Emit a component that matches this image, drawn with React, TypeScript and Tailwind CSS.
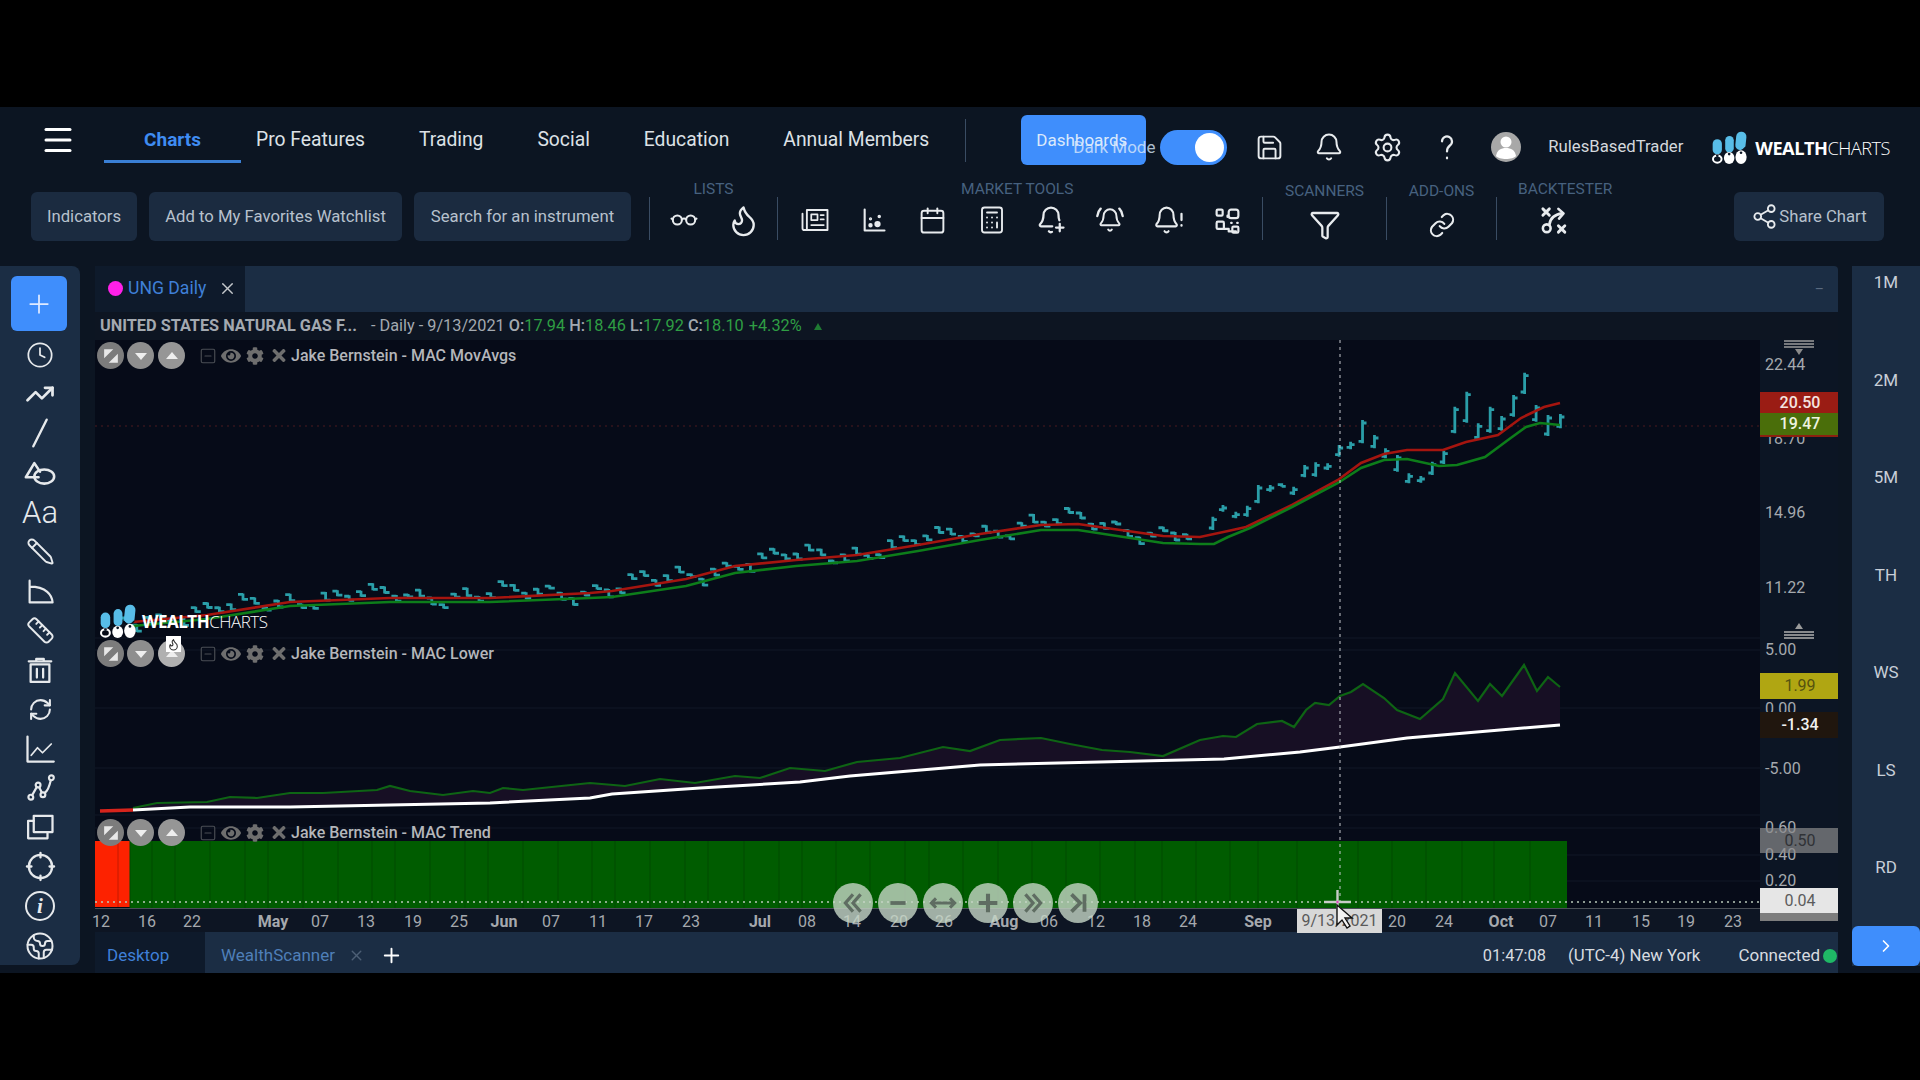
import type { ReactNode } from 'react';
import {
  Bell,
  Calculator,
  Calendar,
  ChevronRight,
  Clock,
  Earth,
  Filter,
  Flame,
  Menu,
  Pencil,
  Plus,
  RefreshCw,
  Ruler,
  Save,
  Settings,
  Share2,
  SquareMinus,
  TrendingUp,
  X,
} from 'lucide-react';
import { FaCog, FaEye, FaTimes } from 'react-icons/fa';

type Pt = [number, number];

const bellPath =
  'M10.268 21a2 2 0 0 0 3.464 0M3.262 15.326A1 1 0 0 0 4 17h16a1 1 0 0 0 .74-1.673C19.41 13.956 18 12.499 18 8A6 6 0 0 0 6 8c0 4.499-1.411 5.956-2.738 7.326';

// chart data, in page pixels
const redMa: Pt[] = [
  [133, 622], [207, 615], [290, 602], [390, 598], [490, 598], [590, 593], [612, 591], [686, 579], [735, 566],
  [796, 560], [857, 555], [918, 545], [980, 534], [1041, 525], [1078, 524], [1163, 536], [1200, 537], [1228, 531],
  [1246, 527], [1292, 505], [1338, 480], [1361, 463], [1384, 454], [1407, 450], [1443, 450], [1466, 442],
  [1498, 435], [1521, 418], [1544, 407], [1560, 403],
];
const greenMa: Pt[] = [
  [133, 626], [207, 619], [290, 606], [390, 602], [490, 602], [590, 598], [612, 597], [686, 586], [735, 573],
  [796, 566], [857, 561], [918, 551], [980, 540], [1041, 530], [1078, 530], [1163, 543], [1200, 544], [1214, 544],
  [1228, 537], [1250, 528], [1292, 507], [1338, 483], [1361, 468], [1384, 460], [1407, 459], [1439, 466],
  [1457, 465], [1485, 457], [1508, 440], [1526, 427], [1540, 423], [1560, 425],
];
const lowerGreen: Pt[] = [
  [133, 808], [157, 803], [207, 802], [230, 797], [257, 798], [290, 793], [323, 793], [377, 790], [390, 786],
  [410, 791], [443, 795], [473, 791], [490, 793], [503, 788], [523, 790], [590, 783], [625, 786], [660, 779],
  [695, 783], [735, 776], [760, 778], [790, 768], [825, 771], [857, 762], [900, 758], [943, 747], [970, 751],
  [1000, 740], [1041, 738], [1070, 744], [1102, 750], [1130, 752], [1163, 756], [1200, 740], [1223, 736],
  [1236, 737], [1257, 724], [1282, 721], [1294, 727], [1306, 710], [1315, 703], [1329, 705], [1340, 696],
  [1351, 692], [1363, 684], [1384, 698], [1397, 710], [1420, 719], [1443, 699], [1455, 673], [1478, 701],
  [1490, 684], [1502, 696], [1524, 665], [1537, 691], [1548, 677], [1560, 687],
];
const lowerWhite: Pt[] = [
  [133, 810], [190, 807], [290, 807], [390, 805], [490, 803], [590, 798], [612, 794], [700, 788], [800, 782],
  [850, 776], [980, 765], [1100, 762], [1224, 759], [1300, 752], [1340, 747], [1407, 738], [1500, 730], [1560, 725],
];

// last 31 bars were read off the picture: high, low
const lateBars: Pt[] = [
  [530, 570], [495, 515], [515, 535], [497, 530], [435, 490], [435, 455], [430, 440], [440, 465], [375, 412],
  [367, 410], [370, 390], [315, 350], [305, 328], [240, 310], [285, 325], [325, 355], [345, 395], [400, 430],
  [408, 428], [365, 405], [332, 372], [200, 280], [155, 248], [250, 298], [200, 278], [228, 272], [165, 230],
  [98, 162], [195, 245], [225, 288], [222, 265],
];
const lateX = [
  28, 50, 78, 103, 127, 153, 178, 204, 228, 252, 278, 303, 328, 354, 380, 404, 430, 455, 481, 506, 531, 555, 581,
  606, 632, 657, 683, 707, 732, 758, 785,
];

function interp(pts: Pt[], x: number) {
  for (let i = 1; i < pts.length; i++) {
    if (x <= pts[i][0]) {
      const [x0, y0] = pts[i - 1];
      const [x1, y1] = pts[i];
      return y0 + ((y1 - y0) * (x - x0)) / (x1 - x0);
    }
  }
  return pts[pts.length - 1][1];
}

const poly = (pts: Pt[]) => pts.map((p) => p.join(',')).join(' ');

function barPaths() {
  const out: string[] = [];
  for (let i = 0; i < 91; i++) {
    const x = 125 + i * 11.8;
    const mid = interp(redMa, Math.max(x, 133)) + 6 * Math.sin(i * 1.7) + 5 * Math.sin(i * 0.53) - 3;
    const hi = mid - 2 - (i % 3);
    const lo = mid + 2 + ((i * 7) % 4);
    out.push(`M${x} ${hi}V${lo}M${x - 5} ${hi + 1}H${x}M${x} ${lo - 1}H${x + 5}`);
  }
  lateBars.forEach(([h, l], i) => {
    const x = 1200 + lateX[i] / 2.178;
    const hi = 340 + h / 3;
    const lo = 340 + l / 3;
    out.push(`M${x} ${hi}V${lo}M${x - 4} ${lo - 2}H${x}M${x} ${hi + 3}H${x + 4}`);
  });
  return out.join('');
}

const trendLines = [
  130, 152, 175, 210, 245, 268, 303, 338, 372, 395, 430, 465, 488, 523, 558, 592, 615, 650, 685, 708, 744, 779,
  802, 836, 870, 905, 929, 963, 998, 1032, 1066, 1100, 1135, 1162, 1196, 1230, 1258, 1297, 1358, 1392, 1426, 1462,
  1494, 1530,
];

const dateTicks: [string, number, boolean?][] = [
  ['12', 101], ['16', 147], ['22', 192], ['May', 273, true], ['07', 320], ['13', 366], ['19', 413], ['25', 459],
  ['Jun', 504, true], ['07', 551], ['11', 598], ['17', 644], ['23', 691], ['Jul', 760, true], ['08', 807],
  ['14', 852], ['20', 899], ['26', 944], ['Aug', 1004, true], ['06', 1049], ['12', 1096], ['18', 1142], ['24', 1188],
  ['Sep', 1258, true], ['20', 1397], ['24', 1444], ['Oct', 1501, true], ['07', 1548], ['11', 1594], ['15', 1641],
  ['19', 1686], ['23', 1733],
];

const axisTicks: [string, number][] = [
  ['22.44', 365], ['18.70', 439], ['14.96', 513], ['11.22', 588], ['5.00', 650], ['0.00', 709], ['-5.00', 769],
  ['0.60', 828], ['0.40', 855], ['0.20', 881],
];

const gridYs = [638, 650, 708, 768, 815, 828, 855, 881];

function Logo({ className }: { className: string }) {
  return (
    <svg viewBox="0 0 110 100" className={className}>
      <rect x="7" y="25" width="28" height="46" rx="14" fill="#58bde8" />
      <rect x="45" y="15" width="26" height="50" rx="13" fill="#58bde8" />
      <rect x="77" y="2" width="31" height="56" rx="15" fill="#58bde8" transform="rotate(6 92 30)" />
      <path d="M4 70 C14 80 30 80 40 66 M40 66 C50 72 66 72 74 60 C84 66 98 60 106 50" fill="none" stroke="#0d1624" strokeWidth="4" />
      <ellipse cx="21" cy="85" rx="13" ry="11" fill="none" stroke="#fff" strokeWidth="6" />
      <ellipse cx="57" cy="82" rx="16" ry="18" fill="#fff" />
      <ellipse cx="93" cy="79" rx="17" ry="21" fill="#fff" />
      <circle cx="21" cy="75" r="4" fill="#0d1624" />
      <circle cx="57" cy="70" r="4" fill="#0d1624" />
      <circle cx="93" cy="66" r="4" fill="#0d1624" />
    </svg>
  );
}

function Wordmark({ className }: { className: string }) {
  return (
    <span className={`[font-family:'Open_Sans',sans-serif] tracking-[-0.5px] text-white ${className}`}>
      <span className="font-bold">WEALTH</span>
      <span className="font-light">CHARTS</span>
    </span>
  );
}

function Line({ children, className = 'h-7 w-7' }: { children: ReactNode; className?: string }) {
  return (
    <svg viewBox="0 0 24 24" fill="none" stroke="currentColor" strokeWidth="1.8" strokeLinecap="round" strokeLinejoin="round" className={className}>
      {children}
    </svg>
  );
}

function NavTool({ children }: { children: ReactNode }) {
  return <div className="flex h-[38px] w-[59px] shrink-0 items-center justify-center text-[#e8ebee]">{children}</div>;
}

function Divider() {
  return <div className="mt-[24px] h-[43px] w-px shrink-0 bg-[#3a4c63]" />;
}

function ToolButton({ label, width }: { label: string; width: string }) {
  return (
    <div className={`mt-[19px] flex h-[49px] shrink-0 items-center justify-center rounded-md bg-[#1b2b40] text-[16.7px] text-[#b7c1cd] ${width}`}>
      {label}
    </div>
  );
}

function SideIcon({ children }: { children: ReactNode }) {
  return <div className="flex h-[39.4px] items-center justify-center text-[#e6e9ec]">{children}</div>;
}

function PaneHeader({ name, top, third }: { name: string; top: string; third?: boolean }) {
  return (
    <div className={`absolute left-[2px] flex h-[27px] items-center ${top}`}>
      <div className="flex h-[27px] w-[27px] items-center justify-center rounded-full bg-[#7c7c7c]">
        <svg viewBox="0 0 14 14" className="h-[16px] w-[16px]" fill="#e8e8e8">
          <path d="M1 1h8L1 9zM13 13H5l8-8z" />
        </svg>
      </div>
      <div className="ml-[3px] flex h-[27px] w-[27px] items-center justify-center rounded-full bg-[#8e8e8e]">
        <svg viewBox="0 0 14 14" className="h-[14px] w-[14px]" fill="#eee">
          <path d="M1 4h12l-6 7z" />
        </svg>
      </div>
      <div className={`relative ml-[4px] flex h-[27px] w-[27px] items-center justify-center rounded-full ${third ? 'bg-[#b0b0b0]' : 'bg-[#969696]'}`}>
        <svg viewBox="0 0 14 14" className="h-[14px] w-[14px]" fill="#eee">
          <path d="M1 10h12L7 3z" />
        </svg>
        {third && (
          <div className="absolute left-[8px] top-[-4px] flex h-[16px] w-[15px] items-center justify-center bg-white text-[#333]">
            <Flame className="h-[13px] w-[13px]" />
          </div>
        )}
      </div>
      <SquareMinus className="ml-[14px] h-[18px] w-[18px] text-[#4b4f55]" strokeWidth={1.5} />
      <FaEye className="ml-[4px] h-[20px] w-[20px] text-[#6e6e6e]" />
      <FaCog className="ml-[5px] h-[18px] w-[18px] text-[#6e6e6e]" />
      <FaTimes className="ml-[6px] h-[19px] w-[18px] text-[#6e6e6e]" />
      <span className="ml-[3px] text-[16px] font-medium text-[#b4b6ba]">{name}</span>
    </div>
  );
}

function PlotLines() {
  return (
    <svg viewBox="95 340 1665 568" className="absolute inset-0 h-full w-full">
      {gridYs.map((y) => (
        <line key={y} x1="95" x2="1760" y1={y} y2={y} stroke="#101826" />
      ))}
      <line x1="95" x2="1760" y1="426" y2="426" stroke="#4a1a1e" strokeDasharray="2 4" />
      <path d={barPaths()} fill="none" stroke="#2a9ea8" strokeWidth="2.8" />
      <polyline points={poly(redMa)} fill="none" stroke="#a5150f" strokeWidth="2.6" />
      <polyline points={poly(greenMa)} fill="none" stroke="#0d7d1a" strokeWidth="2.6" />
      <polygon points={poly([...lowerGreen, ...[...lowerWhite].reverse()])} fill="#170f24" />
      <polyline points={poly(lowerGreen)} fill="none" stroke="#0e6414" strokeWidth="2.2" />
      <polyline points={poly(lowerWhite)} fill="none" stroke="#fff" strokeWidth="3" />
      <line x1="100" x2="133" y1="811" y2="810" stroke="#d6241c" strokeWidth="3.5" />
      <rect x="95" y="841" width="35" height="66" fill="#fd2200" />
      <rect x="130" y="841" width="1437" height="67" fill="#005c00" />
      {trendLines.map((x) => (
        <line key={x} x1={x} x2={x} y1="841" y2="908" stroke="#004a00" />
      ))}
      <line x1="118" x2="118" y1="841" y2="907" stroke="#c41a00" />
      <line x1="95" x2="1760" y1="902" y2="902" stroke="#b9c9b9" strokeWidth="1.3" strokeDasharray="2 4" />
      <line x1="1340" x2="1340" y1="340" y2="908" stroke="#c4c8cc" strokeDasharray="3 4" />
    </svg>
  );
}

export default function App() {
  return (
    <div className="flex h-[1080px] w-[1920px] flex-col overflow-hidden bg-black [font-family:Roboto,sans-serif]">
      <div className="h-[107px] shrink-0" />
      <div className="flex h-[866px] shrink-0 flex-col bg-[#0c1522]">
        {/* top nav */}
        <div className="flex h-[66px] shrink-0 items-center pl-[40px]">
          <Menu className="h-9 w-9 text-white" strokeWidth={2} />
          <div className="ml-[28px] flex h-[46px] w-[137px] items-center justify-center border-b-[3px] border-[#3a7fd5] pt-[3px] text-[19px] font-bold text-[#3f8cf2]">
            Charts
          </div>
          <div className="ml-[15px] flex gap-[54px] text-[19.3px] text-[#dde1e6]">
            <span>Pro Features</span>
            <span>Trading</span>
            <span>Social</span>
            <span>Education</span>
            <span>Annual Members</span>
          </div>
          <div className="ml-[36px] h-[43px] w-px bg-[#3a4c63]" />
          <div className="relative ml-[55px] flex h-[50px] w-[125px] items-center justify-center rounded-md bg-[#3f8efc] text-[17px] text-[#dbe9fb]">
            <span className="pr-[4px] pt-[1px]">Dashboards</span>
            <span className="absolute left-[52px] top-[20px] whitespace-nowrap text-[17px] text-[#dbe9fb]/80">Dark Mode</span>
          </div>
          <div className="mt-[14px] flex items-center">
            <div className="ml-[14px] flex h-[35px] w-[67px] items-center justify-end rounded-full bg-[#3f8efc] pr-[3px]">
              <div className="h-[29px] w-[29px] rounded-full bg-white" />
            </div>
            <div className="ml-[13px] flex w-[59px] justify-center text-[#e8ebee]">
              <Save className="h-[29px] w-[29px]" strokeWidth={1.6} />
            </div>
            <div className="flex w-[59px] justify-center text-[#e8ebee]">
              <Bell className="h-[30px] w-[30px]" strokeWidth={1.6} />
            </div>
            <div className="flex w-[59px] justify-center text-[#e8ebee]">
              <Settings className="h-[31px] w-[31px]" strokeWidth={1.6} />
            </div>
            <div className="flex w-[59px] justify-center text-[#e8ebee]">
              <Line className="h-[30px] w-[30px]">
                <path d="M8 7.5a4 4 0 1 1 6.3 3.3C12.8 12 12 13 12 15.5" />
                <path d="M12 20.5v.5" />
              </Line>
            </div>
            <div className="flex w-[59px] justify-center">
              <svg viewBox="0 0 30 30" className="h-[30px] w-[30px]">
                <circle cx="15" cy="15" r="15" fill="#a8a8a8" />
                <circle cx="15" cy="10" r="5.5" fill="#fff" />
                <path d="M5 24c1-6 5-8 10-8s9 2 10 8c-3 4-17 4-20 0z" fill="#fff" />
              </svg>
            </div>
            <span className="ml-[13px] text-[16.7px] text-[#d4d8dd]">RulesBasedTrader</span>
            <Logo className="ml-[27px] h-[33px] w-[37px]" />
            <Wordmark className="ml-[8px] mt-[4px] text-[18.2px]" />
          </div>
        </div>

        {/* tool row */}
        <div className="flex h-[93px] shrink-0 items-start pl-[31px]">
          <ToolButton label="Indicators" width="w-[106px]" />
          <div className="w-[12px] shrink-0" />
          <ToolButton label="Add to My Favorites Watchlist" width="w-[253px]" />
          <div className="w-[12px] shrink-0" />
          <ToolButton label="Search for an instrument" width="w-[217px]" />
          <div className="w-[18px] shrink-0" />
          <Divider />
          <div className="w-[127px] shrink-0">
            <div className="flex h-[28px] items-center justify-center pt-[5px] text-[15.5px] text-[#47617f]">LISTS</div>
            <div className="flex justify-center">
              <NavTool>
                <Line className="h-[32px] w-[32px]">
                  <circle cx="7" cy="12" r="3.4" strokeWidth="1.5" />
                  <circle cx="17" cy="12" r="3.4" strokeWidth="1.5" />
                  <path d="M10.4 11.5c1-.7 2.2-.7 3.2 0M3.6 11.5 2.6 11M20.4 11.5l1-.5" strokeWidth="1.5" />
                </Line>
              </NavTool>
              <NavTool>
                <Flame className="h-[35px] w-[35px]" strokeWidth={1.6} />
              </NavTool>
            </div>
          </div>
          <Divider />
          <div className="w-[484px] shrink-0">
            <div className="flex h-[28px] items-center pl-[183px] pt-[5px] text-[15.5px] text-[#47617f]">MARKET TOOLS</div>
            <div className="flex pl-[7px]">
              <NavTool>
                <Line className="h-[30px] w-[30px]">
                  <rect x="5.5" y="4" width="16.5" height="16" strokeWidth="1.5" />
                  <path d="M5.5 20H3.5A1.5 1.5 0 0 1 2 18.5V7" strokeWidth="1.5" />
                  <rect x="9" y="7.5" width="5" height="4.5" strokeWidth="1.4" />
                  <path d="M16.5 8h2.5M16.5 11.5h2.5M9 16h10" strokeWidth="1.4" />
                </Line>
              </NavTool>
              <NavTool>
                <Line className="h-[28px] w-[28px]">
                  <path d="M4 3v18h17" />
                  <circle cx="9" cy="16.5" r="1" fill="currentColor" />
                  <circle cx="15" cy="15.5" r="1.8" fill="currentColor" />
                  <circle cx="9" cy="11" r="0.5" fill="currentColor" />
                  <circle cx="16.5" cy="9" r="0.6" fill="currentColor" />
                </Line>
              </NavTool>
              <NavTool>
                <Calendar className="h-[29px] w-[29px]" strokeWidth={1.6} />
              </NavTool>
              <NavTool>
                <Calculator className="h-[30px] w-[30px]" strokeWidth={1.5} />
              </NavTool>
              <NavTool>
                <Line className="h-[30px] w-[30px]">
                  <path d="M10.3 21a2 2 0 0 0 2.5.5M13 17H4a1 1 0 0 1-.74-1.67C4.6 13.96 6 12.5 6 8a6 6 0 0 1 12 0c0 1.8.2 3.1.7 4.2" />
                  <path d="M19 15v6M16 18h6" />
                </Line>
              </NavTool>
              <NavTool>
                <Line className="h-[32px] w-[32px]">
                  <path d={bellPath} transform="translate(2.4 2.4) scale(.8)" />
                  <path d="M2.5 9c.2-2.3 1-4 2.5-5.5M21.5 9c-.2-2.3-1-4-2.5-5.5" />
                </Line>
              </NavTool>
              <NavTool>
                <Line className="h-[30px] w-[30px]">
                  <path d={bellPath} transform="translate(-1 0) scale(.92 1)" />
                  <path d="M22 7v5M22 16v.5" />
                </Line>
              </NavTool>
              <NavTool>
                <Line className="h-[29px] w-[29px]">
                  <rect x="3" y="3" width="5" height="5" rx="1" />
                  <rect x="3" y="13" width="6" height="6" rx="1" />
                  <path d="M9 19h4v2h6" />
                  <rect x="13" y="3" width="8" height="7" rx="2" />
                  <path d="M12 8v3" strokeDasharray="1 2" />
                  <rect x="16" y="17" width="5" height="5" rx="1" />
                  <path d="M15 14h.5M20 14h.5" />
                </Line>
              </NavTool>
            </div>
          </div>
          <Divider />
          <div className="w-[123px] shrink-0">
            <div className="flex h-[28px] items-center justify-center pt-[10px] text-[15.5px] text-[#47617f]">SCANNERS</div>
            <div className="mt-[5px] flex justify-center">
              <NavTool>
                <Filter className="h-[32px] w-[32px]" strokeWidth={1.7} />
              </NavTool>
            </div>
          </div>
          <Divider />
          <div className="w-[109px] shrink-0">
            <div className="flex h-[28px] items-center justify-center pt-[10px] text-[15.5px] text-[#47617f]">ADD-ONS</div>
            <div className="mt-[5px] flex justify-center">
              <NavTool>
                <Line className="h-[28px] w-[28px]">
                  <path d="M10 13a5 5 0 0 0 7.5.5l3-3a5 5 0 0 0-7-7l-1.7 1.7" />
                  <path d="M14 11a5 5 0 0 0-7.5-.5l-3 3a5 5 0 0 0 7 7l1.7-1.7" />
                </Line>
              </NavTool>
            </div>
          </div>
          <Divider />
          <div className="w-[236px] shrink-0">
            <div className="flex h-[28px] items-center pl-[21px] pt-[5px] text-[15.5px] text-[#47617f]">BACKTESTER</div>
            <div className="flex pl-[28px]">
              <NavTool>
                <Line className="h-[31px] w-[31px]">
                  <path d="M3 3l5 5M8 3 3 8M15 16l5 5M20 16l-5 5" strokeWidth="2.2" />
                  <circle cx="6" cy="18" r="3" strokeWidth="2" />
                  <path d="M8 15.5c.5-5 3-8 10-9" strokeWidth="2" />
                  <path d="M15 3l4 3.5-3.5 4" strokeWidth="2" />
                </Line>
              </NavTool>
            </div>
          </div>
          <div className="ml-[1px] mt-[19px] flex h-[49px] w-[150px] shrink-0 items-center justify-center gap-[1px] rounded-md bg-[#1b2b40] text-[16.7px] text-[#b7c1cd]">
            <Share2 className="h-[27px] w-[27px] text-[#e8ebee]" strokeWidth={1.6} />
            Share Chart
          </div>
        </div>

        {/* panels */}
        <div className="flex h-[707px] shrink-0 items-start">
          <aside className="h-[699px] w-[80px] shrink-0 rounded-r-lg bg-[#1b2d44]">
            <div className="mx-[11px] mb-[4px] mt-[10px] flex h-[55px] w-[56px] items-center justify-center rounded-md bg-[#3f8efc] text-[#dfeaff]">
              <Plus className="h-[30px] w-[30px]" strokeWidth={1.4} />
            </div>
            <SideIcon>
              <Clock className="h-[28px] w-[28px]" strokeWidth={1.5} />
            </SideIcon>
            <SideIcon>
              <TrendingUp className="h-[30px] w-[30px]" strokeWidth={2.2} />
            </SideIcon>
            <SideIcon>
              <Line className="h-[32px] w-[32px]">
                <path d="M7 22 17 2" />
              </Line>
            </SideIcon>
            <SideIcon>
              <Line className="h-[34px] w-[34px]">
                <path d="M11 15H2L8 5l4 6" />
                <ellipse cx="15" cy="14.5" rx="7" ry="5" />
              </Line>
            </SideIcon>
            <SideIcon>
              <span className="text-[31px] font-light leading-none">Aa</span>
            </SideIcon>
            <SideIcon>
              <Pencil className="h-[29px] w-[29px] -scale-x-100" strokeWidth={1.6} />
            </SideIcon>
            <SideIcon>
              <Line className="h-[29px] w-[29px]">
                <path d="M3 3v18h19c-.5-6-5-13-19-13" />
              </Line>
            </SideIcon>
            <SideIcon>
              <Ruler className="h-[29px] w-[29px]" strokeWidth={1.6} />
            </SideIcon>
            <SideIcon>
              <Line className="h-[30px] w-[30px]">
                <path d="M3 5h18M9 5V3h6v2" />
                <rect x="4.5" y="7.5" width="15" height="14" />
                <path d="M9.5 11v7M14.5 11v7" />
              </Line>
            </SideIcon>
            <SideIcon>
              <RefreshCw className="h-[25px] w-[25px]" strokeWidth={2} />
            </SideIcon>
            <SideIcon>
              <Line className="h-[30px] w-[30px]">
                <path d="M2 2v20h21" />
                <path d="M5 17l5-6 4 4 7-7" strokeWidth="1.4" />
              </Line>
            </SideIcon>
            <SideIcon>
              <Line className="h-[29px] w-[29px]">
                <circle cx="4" cy="20" r="2" />
                <circle cx="10" cy="10" r="2" />
                <circle cx="14" cy="18" r="2" />
                <circle cx="21" cy="4" r="2" />
                <path d="M5 18.5 9 11.5M11 12l2 4M15.5 16.5c3-2 4-6 5-10.5" />
              </Line>
            </SideIcon>
            <SideIcon>
              <Line className="h-[30px] w-[30px]">
                <rect x="7" y="3" width="15" height="13" />
                <path d="M7 7H2.5v14H18v-5" />
              </Line>
            </SideIcon>
            <SideIcon>
              <Line className="h-[31px] w-[31px]">
                <circle cx="12" cy="12" r="9" />
                <path d="M12 1.5V5M12 19v3.5M1.5 12H5M19 12h3.5" />
              </Line>
            </SideIcon>
            <SideIcon>
              <div className="flex h-[30px] w-[30px] items-center justify-center rounded-full border-2 border-[#e6e9ec] [font-family:'Liberation_Serif',serif] text-[21px] font-bold italic leading-none">
                i
              </div>
            </SideIcon>
            <SideIcon>
              <Earth className="h-[30px] w-[30px]" strokeWidth={1.6} />
            </SideIcon>
          </aside>

          <section className="ml-[15px] flex h-[707px] w-[1743px] shrink-0 flex-col">
            {/* tab strip */}
            <div className="flex h-[46px] shrink-0 items-stretch rounded-t-sm bg-[#1b2d44]">
              <div className="flex w-[150px] items-center bg-[#0e1a2b] pb-[2px] pl-[13px]">
                <span className="h-[15px] w-[15px] rounded-full bg-[#ff20e8]" />
                <span className="ml-[5px] text-[17.6px] text-[#3f80d8]">UNG Daily</span>
                <X className="ml-[12px] h-[19px] w-[19px] text-[#c4c8cc]" strokeWidth={1.7} />
              </div>
              <span className="ml-auto mr-[14px] mt-[16px] text-[14px] leading-none text-[#5b6b80]">–</span>
            </div>

            {/* symbol info */}
            <div className="flex h-[28px] shrink-0 items-center bg-[#0d1522] pl-[5px] text-[16.3px] text-[#a3a9b0]">
              <span className="font-bold">UNITED STATES NATURAL GAS F...</span>
              <span className="ml-[14px]">- Daily - 9/13/2021</span>
              <span className="ml-[4px] font-medium">O:</span>
              <span className="text-[#2f9e44]">17.94</span>
              <span className="ml-[4px] font-medium">H:</span>
              <span className="text-[#2f9e44]">18.46</span>
              <span className="ml-[4px] font-medium">L:</span>
              <span className="text-[#2f9e44]">17.92</span>
              <span className="ml-[4px] font-medium">C:</span>
              <span className="text-[#2f9e44]">18.10</span>
              <span className="ml-[5px] text-[#2f9e44]">+4.32%</span>
              <span className="ml-[12px] h-0 w-0 border-x-[4px] border-b-[7px] border-x-transparent border-b-[#1f7a33]" />
            </div>

            {/* plot + price axis */}
            <div className="relative flex h-[568px] shrink-0">
              <div className="relative w-[1665px] shrink-0 bg-[#060b18]">
                <PlotLines />
                <PaneHeader name="Jake Bernstein - MAC MovAvgs" top="top-[2px]" />
                <div className="absolute left-[3px] top-[264px] flex items-center">
                  <Logo className="h-[34px] w-[38px]" />
                  <Wordmark className="ml-[6px] mt-[2px] text-[17px]" />
                </div>
                <PaneHeader name="Jake Bernstein - MAC Lower" top="top-[300px]" third />
                <PaneHeader name="Jake Bernstein - MAC Trend" top="top-[479px]" />
                <div className="absolute left-[738px] top-[543px] z-10 flex gap-[5px] text-[#5f6d62]">
                  <div className="flex h-[40px] w-[40px] items-center justify-center rounded-full bg-[#c6d6c6]/80">
                    <svg viewBox="0 0 24 24" className="h-[26px] w-[26px]" fill="none" stroke="currentColor" strokeWidth="3">
                      <path d="M12 4 5 12l7 8M19 4l-7 8 7 8" />
                    </svg>
                  </div>
                  <div className="flex h-[40px] w-[40px] items-center justify-center rounded-full bg-[#c6d6c6]/80">
                    <svg viewBox="0 0 24 24" className="h-[26px] w-[26px]" fill="none" stroke="currentColor" strokeWidth="3.5">
                      <path d="M5 12h14" />
                    </svg>
                  </div>
                  <div className="flex h-[40px] w-[40px] items-center justify-center rounded-full bg-[#c6d6c6]/80">
                    <svg viewBox="0 0 24 24" className="h-[28px] w-[28px]" fill="none" stroke="currentColor" strokeWidth="2.6">
                      <path d="M2 12h20M6 8l-4 4 4 4M18 8l4 4-4 4" />
                    </svg>
                  </div>
                  <div className="flex h-[40px] w-[40px] items-center justify-center rounded-full bg-[#c6d6c6]/80">
                    <svg viewBox="0 0 24 24" className="h-[28px] w-[28px]" fill="none" stroke="currentColor" strokeWidth="3.5">
                      <path d="M4 12h16M12 4v16" />
                    </svg>
                  </div>
                  <div className="flex h-[40px] w-[40px] items-center justify-center rounded-full bg-[#c6d6c6]/80">
                    <svg viewBox="0 0 24 24" className="h-[26px] w-[26px]" fill="none" stroke="currentColor" strokeWidth="3">
                      <path d="m5 4 7 8-7 8M12 4l7 8-7 8" />
                    </svg>
                  </div>
                  <div className="flex h-[40px] w-[40px] items-center justify-center rounded-full bg-[#c6d6c6]/80">
                    <svg viewBox="0 0 24 24" className="h-[26px] w-[26px]" fill="none" stroke="currentColor" strokeWidth="3.5">
                      <path d="m6 4 8 8-8 8M18 4v16" />
                    </svg>
                  </div>
                </div>
              </div>

              <div className="relative z-10 w-[78px] shrink-0 bg-[#0c1524] text-[16px] text-[#a5a9ae]">
                {axisTicks.map(([label, y]) => (
                  <span key={label} className="absolute left-[5px] -translate-y-1/2" style={{ top: y - 340 }}>
                    {label}
                  </span>
                ))}
                <svg viewBox="0 0 78 568" className="absolute inset-0 h-full w-full">
                  <path d="M24 1h30M24 4h30M24 7h30" stroke="#9a9a9a" strokeWidth="1.6" />
                  <path d="M35 9h8l-4 6z" fill="#8a8a8a" />
                  <path d="M35 289h8l-4-6z" fill="#9a9a9a" />
                  <path d="M24 292h30M24 295h30M24 298h30" stroke="#b0b0b0" strokeWidth="1.6" />
                </svg>
                <div className="absolute left-0 top-[52px] flex h-[21px] w-full items-center justify-center bg-[#9a1c14] pl-[2px] text-[16px] font-medium text-[#f4e4e0]">
                  20.50
                </div>
                <div className="absolute left-0 top-[73px] flex h-[24px] w-full items-center justify-center border-b-2 border-[#8c2010] bg-[#4a6e0a] pl-[2px] text-[16px] font-medium text-[#eef4e0]">
                  19.47
                </div>
                <div className="absolute left-0 top-[333px] flex h-[26px] w-full items-center justify-center bg-[#b0a612] pl-[2px] text-[16px] text-[#55520f]">
                  1.99
                </div>
                <div className="absolute left-0 top-[372px] flex h-[26px] w-full items-center justify-center bg-[#20160e] pl-[2px] text-[16px] font-medium text-[#f0f0f0]">
                  -1.34
                </div>
                <div className="absolute left-0 top-[488px] flex h-[25px] w-full items-center justify-center bg-[#8a8a8c]/70 pl-[2px] text-[16px] text-[#303236]">
                  0.50
                </div>
                <div className="absolute left-0 top-[548px] z-10 flex h-[25px] w-full items-center justify-center bg-[#e6e6e6] pl-[2px] text-[16px] text-[#5c5c5c]">
                  0.04
                </div>
              </div>

              {/* mouse pointer, sits over the axis too */}
              <svg viewBox="0 0 60 60" className="absolute left-[1215px] top-[545px] z-20 h-[60px] w-[60px]">
                <path d="M14 17h27M27.5 5v25" stroke="#c8ccc8" strokeWidth="2.4" />
                <circle cx="27.5" cy="17" r="1.2" fill="#e040c0" />
                <path d="M27 20v20l5-5 5 8 3-2-5-8h7z" fill="#f2f2f2" stroke="#111" strokeWidth="1.4" />
              </svg>
            </div>

            {/* time axis */}
            <div className="relative h-[24px] shrink-0 border-t border-[#4a4f57] bg-[#0d1523] text-[16px] text-[#a5a9ae]">
              {dateTicks.map(([label, x, bold]) => (
                <span
                  key={`${label}-${x}`}
                  className={`absolute top-[1px] -translate-x-1/2 ${bold ? 'font-bold' : ''}`}
                  style={{ left: x - 95 }}
                >
                  {label}
                </span>
              ))}
              <div className="absolute left-[1202px] top-0 flex h-[24px] w-[85px] items-center justify-center bg-[#d8d8d8] text-[16px] text-[#5a5a5a]">
                9/13/2021
              </div>
              <div className="absolute left-[1665px] top-0 h-[12px] w-[78px] bg-[#7d7d7d]" />
            </div>

            {/* bottom tabs */}
            <div className="flex h-[41px] shrink-0 items-center bg-[#1b2d44] text-[17px]">
              <div className="flex h-full w-[110px] items-center bg-[#0e1a2b] pl-[12px] pt-[7px] text-[#3f80d8]">Desktop</div>
              <span className="ml-[16px] mt-[7px] text-[#4f7fb8]">WealthScanner</span>
              <X className="ml-[13px] mt-[5px] h-[17px] w-[17px] text-[#4d5f75]" strokeWidth={2} />
              <Plus className="ml-[15px] mt-[5px] h-[23px] w-[23px] text-white" strokeWidth={2} />
              <span className="ml-auto mt-[7px] text-[16.4px] text-[#d8dce0]">01:47:08</span>
              <span className="ml-[22px] mt-[7px] text-[16.8px] text-[#d8dce0]">(UTC-4) New York</span>
              <span className="ml-[38px] mt-[7px] text-[#d8dce0]">Connected</span>
              <span className="ml-[3px] mr-[1px] mt-[6px] h-[14px] w-[14px] rounded-full bg-[#1fb866]" />
            </div>
          </section>

          <aside className="ml-[14px] flex h-[700px] w-[68px] shrink-0 flex-col bg-[#1b2d44]">
            <div className="flex flex-col gap-[63.5px] text-[17px] text-[#c8cfd8]">
              {['1M', '2M', '5M', 'TH', 'WS', 'LS', 'RD'].map((label) => (
                <div key={label} className="flex h-[34px] items-center justify-center">
                  {label}
                </div>
              ))}
            </div>
            <div className="mt-auto flex h-[40px] items-center justify-center rounded-md bg-[#3f8efc] text-white">
              <ChevronRight className="h-[20px] w-[20px]" strokeWidth={2} />
            </div>
          </aside>
        </div>
      </div>
    </div>
  );
}
